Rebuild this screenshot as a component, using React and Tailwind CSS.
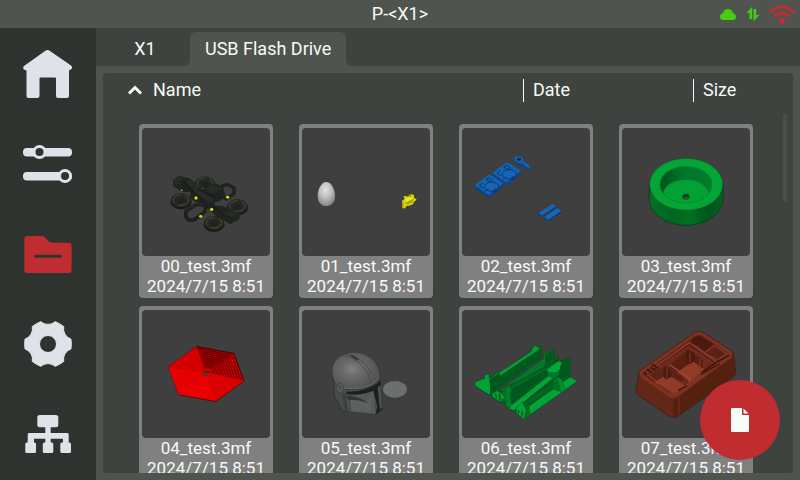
import React from "react";

const gearPath = (() => {
  const point = (deg) => {
    const a = (deg * Math.PI) / 180;
    return `${(25 + 23.5 * Math.cos(a)).toFixed(2)} ${(25 + 23.5 * Math.sin(a)).toFixed(2)}`;
  };
  let d = `M${point(-12)}`;
  for (let k = 0; k < 6; k += 1) {
    d += `A34 34 0 0 1 ${point(k * 60 + 12)}A11 11 0 0 0 ${point(k * 60 + 48)}`;
  }
  return `${d}ZM33.5 25A8.5 8.5 0 1 0 16.5 25A8.5 8.5 0 1 0 33.5 25Z`;
})();

function HomeIcon() {
  return (
    <path d="M22 3Q24.500 1 27 3L48 17.500Q49.800 19.200 48.500 21L46 22.500V48q0 2-2 2H35q-2 0-2-2V30.500Q33 29.500 32 29.500H17.500Q16.500 29.500 16.500 30.500V48q0 2-2 2H5.500q-2 0-2-2V22.500L.8 21.500Q-.5 19.500 1 18Z" />
  );
}

function SlidersIcon() {
  return (
    <>
      <rect x="0" y="9" width="49" height="8.500" rx="4" />
      <rect x="0" y="33" width="49" height="8.500" rx="4" />
      <circle cx="16.500" cy="13" r="5.500" className="fill-[#2e332f] stroke-[#dfe2e8] stroke-[3]" />
      <circle cx="42" cy="37" r="5.500" className="fill-[#2e332f] stroke-[#dfe2e8] stroke-[3]" />
    </>
  );
}

function FolderIcon() {
  return (
    <>
      <path d="M1.300 10Q1.300 7 4.300 7H18.500Q20.500 7 22 8.500L26 12.500Q27.500 13.700 29.500 13.700H45.500Q48.600 13.700 48.600 16.700V41Q48.600 44 45.600 44H4.300Q1.300 44 1.300 41Z" />
      <rect x="11" y="25.800" width="28" height="3" rx="1.500" className="fill-[#2e332f]" />
    </>
  );
}

function GearIcon() {
  return <path fillRule="evenodd" d={gearPath} className="stroke-[#dfe2e8] stroke-[1]" strokeLinejoin="round" />;
}

function NetworkIcon() {
  return (
    <>
      <rect x="14.300" y="5" width="21" height="12.300" rx="2.500" />
      <path d="M22.300 16H27.700V23H44.500Q45.700 23 45.700 24.500V33H40V28.800H27.700V33H22.300V28.800H11V33H4.700V24.500Q4.700 23 6 23H22.300Z" />
      <rect x="2.300" y="32.500" width="10.700" height="10.500" rx="1.500" />
      <rect x="19.800" y="32.500" width="10.500" height="10.500" rx="1.500" />
      <rect x="37.300" y="32.500" width="10.700" height="10.500" rx="1.500" />
    </>
  );
}

const NAV = [
  { label: "Home", Icon: HomeIcon },
  { label: "Controls", Icon: SlidersIcon },
  { label: "Files", Icon: FolderIcon, active: true },
  { label: "Settings", Icon: GearIcon },
  { label: "Network", Icon: NetworkIcon },
];

function RobotModel() {
  const wheels = [
    [225, 207],
    [153, 257],
    [322, 275],
    [252, 325],
  ];
  return (
    <svg viewBox="36 39 384 384" className="size-full">
      <path d="M272 215L292 208L312 219V236L290 252L268 240" fill="none" stroke="#1f2320" strokeWidth="10" />
      {wheels.map(([x, y]) => (
        <g key={`${x}-${y}`}>
          <ellipse cx={x} cy={y + 3} rx="32" ry="23" fill="#191b19" />
          <ellipse cx={x} cy={y - 2} rx="30" ry="21" fill="#272b28" />
          <ellipse cx={x} cy={y - 2} rx="23" ry="16" fill="#242825" stroke="#74740f" strokeWidth="1.500" strokeDasharray="40 12" />
          <path d={`M${x - 12} ${y}q12-12 24-2q-3 12-16 12z`} fill="#1e211f" />
        </g>
      ))}
      <path d="M129 194L147 182L163 187L178 190L197 205L194 216L213 229L240 207L264 208L281 222L286 240L270 258L252 262L256 272L276 272L300 284L330 293L328 313L300 328L281 316L262 306L246 292L232 278L216 268L194 259L179 247L181 232L156 230L130 214Z" fill="#1f2320" />
      <path d="M129 194L147 182L163 187L147 200L154 207L137 212ZM226 222L244 208L277 219L262 230L246 238ZM282 293L304 287L327 295L307 307Z" fill="#282c29" />
      <path d="M163 199L181 193L196 207L216 243L205 242L177 211ZM206 225L232 238L253 254L241 264L207 240Z" fill="#272b28" />
      <path d="M180 222L218 254M215 228L254 247M248 274L280 300M163 199L179 222" stroke="#151816" strokeWidth="3" />
      <path d="M168 289L199 268L220 269L228 276L224 291L193 314L177 316L168 306Z" fill="none" stroke="#1d201e" strokeWidth="11" />
      <path d="M169 286L199 265L219 267" fill="none" stroke="#2b2f2c" strokeWidth="3" />
      <g fill="#d8d80a">
        <ellipse cx="198" cy="249" rx="5" ry="5" />
        <ellipse cx="245" cy="283" rx="5" ry="5" />
        <ellipse cx="293" cy="247" rx="5" ry="4" />
        <ellipse cx="212" cy="304" rx="5" ry="4" />
        <circle cx="155" cy="226" r="2.500" />
      </g>
    </svg>
  );
}

function EggModel() {
  return (
    <svg viewBox="36 39 384 384" className="size-full">
      <defs>
        <radialGradient id="egg" cx="0.45" cy="0.32" r="0.7">
          <stop offset="0" stopColor="#e2e2e2" />
          <stop offset="0.5" stopColor="#bcbcbc" />
          <stop offset="1" stopColor="#828282" />
        </radialGradient>
      </defs>
      <path d="M109 201C124 201 135 224 135 242C135 262 124 273 109 273C94 273 83 262 83 242C83 224 94 201 109 201Z" fill="url(#egg)" />
      <path d="M336 257L344 252L340 244L349 243L356 247L364 244L360 237L371 239L373 248L380 254L372 260L369 268L357 272L348 274L346 280L337 280Z" fill="#d6d600" />
      <path d="M344 257L356 252L362 257L371 251L368 262L357 267L350 269ZM336 257L341 263L340 280H336ZM360 238L364 244L357 249L350 246Z" fill="#a3a300" />
      <path d="M346 251L358 246L368 245L362 253L353 260L346 261Z" fill="#ecec1c" />
    </svg>
  );
}

function BluePlate({ transform }) {
  return (
    <g transform={transform}>
      <path d="M74 212L114 180Q118 177 122 180L160 204V213L122 246Q118 250 114 247L76 222Z" fill="#0c4485" />
      <path d="M74 211L114 180Q118 177 122 180L160 204L121 237Q117 241 113 238Z" fill="#1762ae" />
      <ellipse cx="125" cy="215" rx="21" ry="14" fill="#1865b3" stroke="#0a3a70" strokeWidth="3" />
      <path d="M100 220L88 211L99 203M108 193L116 188L128 195L121 201ZM104 230L116 222" fill="none" stroke="#0a3a70" strokeWidth="3" />
      <path d="M126 229L137 220L143 227L134 233Z" fill="#0a3a70" />
    </g>
  );
}

function BluePartsModel() {
  return (
    <svg viewBox="36 39 384 384" className="size-full">
      <BluePlate transform="translate(53 -37)" />
      <BluePlate />
      <path d="M192 128L201 123L215 125L222 138L241 153L242 166L234 166L214 152L199 147L193 139Z" fill="#0c4485" />
      <path d="M193 127L202 123L216 127L221 138L242 155L235 160L216 145L202 143L194 136Z" fill="#1762ae" />
      <ellipse cx="207" cy="133" rx="7" ry="4" fill="#0a2d55" />
      <path d="M265 295L307 268L318 275V279L276 305L265 300ZM283 308L322 280L335 287V292L296 318L283 312Z" fill="#0a3a70" />
      <path d="M265 294L307 267L318 274L276 302ZM283 306L322 279L335 287L295 315Z" fill="#1865b3" />
    </svg>
  );
}

function RingModel() {
  return (
    <svg viewBox="36 69 384 384" className="size-full">
      <defs>
        <linearGradient id="ring-side">
          <stop offset="0" stopColor="#007326" />
          <stop offset="0.3" stopColor="#006420" />
          <stop offset="0.55" stopColor="#00701f" />
          <stop offset="0.8" stopColor="#00561b" />
          <stop offset="1" stopColor="#00611e" />
        </linearGradient>
        <linearGradient id="ring-inner">
          <stop offset="0" stopColor="#00501a" />
          <stop offset="0.45" stopColor="#00752a" />
          <stop offset="1" stopColor="#007d2b" />
        </linearGradient>
        <clipPath id="ring-hole">
          <ellipse cx="228" cy="239" rx="79" ry="56" />
        </clipPath>
      </defs>
      <path d="M118 237V287C122 330 171 361 228 361C285 361 336 328 339 285V237Z" fill="url(#ring-side)" stroke="#0e3118" strokeWidth="2" />
      <ellipse cx="228.500" cy="238" rx="110" ry="78" fill="#02a536" stroke="#174423" strokeWidth="1.500" />
      <ellipse cx="228" cy="239" rx="79" ry="56" fill="url(#ring-inner)" />
      <g clipPath="url(#ring-hole)">
        <ellipse cx="228" cy="272" rx="70" ry="49" fill="#02a134" stroke="#007d2a" strokeWidth="3" />
        <ellipse cx="228" cy="239" rx="78" ry="55" fill="none" stroke="#008b2d" strokeWidth="3" />
      </g>
      <ellipse cx="228" cy="275" rx="11" ry="9" fill="#004b19" />
      <ellipse cx="229" cy="280" rx="8" ry="4" fill="#494949" />
    </svg>
  );
}

function HexModel() {
  const rows = Array.from({ length: 13 }, (_, i) => i / 13);
  const rim = [
    [200, 140],
    [311, 161],
    [341, 242],
    [257, 302],
    [146, 282],
    [115, 200],
  ];
  const towards = ([x, y], t) => [x + (228 - x) * t, y + (217 - y) * t];
  const fills = ["#b00000", "#c00000", "#e00000", "#ee0000", "#e80000", "#d80000"];
  const lines = ["#300000", "#400000", "#cc0000", "#e40000", "#dc0000", "#c60000"];
  return (
    <svg viewBox="36 30 384 384" className="size-full">
      <path d="M115 200L200 139L312 160L342 243L257 305L146 284Z" fill="#7c0000" stroke="#351010" strokeWidth="2" />
      {rim.map((p, i) => {
        const q = rim[(i + 1) % 6];
        return (
          <g key={p.join("-")}>
            <path d={`M${p.join(" ")}L${q.join(" ")}L228 217Z`} fill={fills[i]} />
            {rows.map((t) => (
              <path
                key={t}
                d={`M${towards(p, t).join(" ")}L${towards(q, t).join(" ")}`}
                stroke={lines[i]}
                strokeWidth="2"
              />
            ))}
          </g>
        );
      })}
      <path d="M217 210L232 203L246 209L243 222L226 229L214 222Z" fill="#c40000" />
      <path d="M216 219L225 216L242 219L234 226L221 225Z" fill="#3f3f3f" />
      <path d="M222 217L240 216" stroke="#4a0000" strokeWidth="2" />
    </svg>
  );
}

function HelmetModel() {
  return (
    <svg viewBox="36 30 384 384" className="size-full">
      <defs>
        <radialGradient id="dome" cx="0.42" cy="0.45" r="0.62">
          <stop offset="0" stopColor="#808180" />
          <stop offset="0.35" stopColor="#686968" />
          <stop offset="1" stopColor="#4e504f" />
        </radialGradient>
      </defs>
      <path d="M127 215L134 290L157 332L256 344L277 328L269 230Z" fill="#484c4a" stroke="#252725" strokeWidth="1.500" />
      <path d="M166 275L252 262L256 343L182 335L167 326Z" fill="#545a57" />
      <path d="M170 274Q218 278 262 250L270 240L272 258L254 270Q218 289 168 282Z" fill="#1c1f1d" />
      <path d="M249 268L268 255L277 327L257 343L262 320Z" fill="#1b1e1c" />
      <path d="M263 262L272 256L276 324L269 328Z" fill="#4b504d" />
      <path d="M168 286Q214 290 231 309Q203 298 174 301Z" fill="#323634" />
      <path d="M174 301Q203 298 231 309L244 286L246 335L182 333Z" fill="#5c625f" />
      <path d="M156 280L167 279L176 331L165 332Z" fill="#3c403e" />
      <path d="M175 283L182 333" stroke="#3a3e3c" strokeWidth="3" />
      <path d="M126 213C127 175 158 157 195 157C239 158 270 190 270 234C251 266 205 275 151 266C137 256 127 239 126 213Z" fill="url(#dome)" stroke="#292b29" strokeWidth="1.500" />
      <path d="M154 166Q213 175 235 225Q241 241 240 259M161 162Q223 169 245 225" fill="none" stroke="#434544" strokeWidth="2" />
      <path d="M178 166L186 164L206 177L202 182Z" fill="#303331" />
      <path d="M151 262Q200 272 245 254L269 233" fill="none" stroke="#717472" strokeWidth="2" />
      <ellipse cx="150" cy="264" rx="10" ry="13" fill="#5c605e" stroke="#3a3d3b" strokeWidth="2" />
      <path d="M144 257L153 261L149 271" fill="none" stroke="#333634" strokeWidth="3" />
      <ellipse cx="315" cy="271" rx="37" ry="28" fill="#404542" stroke="#2c302e" strokeWidth="1" />
      <ellipse cx="315" cy="268" rx="36" ry="25" fill="#6a706c" />
    </svg>
  );
}

function RailsModel() {
  return (
    <svg viewBox="36 30 384 384" className="size-full" strokeLinejoin="round">
      <path d="M76 246L103 234V225L119 222V234L149 211V221L245 153V144L256 136L265 141L275 139V174L118 286L76 259Z" fill="#007d28" stroke="#0a4119" strokeWidth="2" />
      <path d="M118 240L149 218L275 144V172L119 283Z" fill="#00581d" />
      <path d="M76 247L101 237L121 256L119 284L76 257ZM104 226L116 222L119 254L105 248ZM243 156L254 137L265 142L263 151L150 227L149 218Z" fill="#02a136" />
      <path d="M134 251L265 165" stroke="#008c2d" strokeWidth="3" strokeDasharray="3 18" />
      <path d="M126 280L141 270L155 277L282 177V163L313 145V184L325 169V194L180 303L149 307L127 293Z" fill="#007427" stroke="#0a4119" strokeWidth="2" />
      <path d="M157 267L282 176L281 162L312 147V177L164 285Z" fill="#007a28" />
      <path d="M284 164L312 147V177L286 195ZM180 264L324 173V183L184 282Z" fill="#00591d" />
      <path d="M126 281L142 273L164 290L149 304L128 290Z" fill="#029d34" />
      <path d="M136 280L140 293M148 282L150 300" stroke="#00531b" strokeWidth="4" />
      <path d="M166 263L177 258L324 181L328 185L360 172V236L381 244L222 357L198 340L188 332L166 319Z" fill="#006a23" stroke="#0a4119" strokeWidth="2" />
      <path d="M181 270L294 207L327 184L358 174V232L240 316L184 320Z" fill="#00581d" />
      <path d="M183 317L296 228L310 234L203 320L190 331L178 326ZM222 356L381 244L361 232L239 318L221 348Z" fill="#02a337" />
      <path d="M166 264L176 258L181 266L182 325L167 317Z" fill="#007d29" />
      <path d="M292 208L326 184L335 187L328 211L317 218L293 215Z" fill="#03aa39" />
      <path d="M293 215L318 218L328 211V224L310 236L294 228Z" fill="#00782a" />
      <path d="M309 244L323 231L336 241L347 266L333 276L309 269Z" fill="#008d2e" />
      <path d="M309 244L323 231L333 276L309 268Z" fill="#007024" />
      <path d="M198 323L217 305L237 310L241 340L221 357L199 339Z" fill="#006b23" />
      <path d="M200 326L215 307L228 329L222 356L200 340Z" fill="#02a136" />
      <path d="M205 330L206 339M216 334V347" stroke="#00531b" strokeWidth="4" />
      <path d="M221 309L310 249V262L239 312Z" fill="#006722" />
    </svg>
  );
}

function TrayModel() {
  return (
    <svg viewBox="36 30 384 384" className="size-full" strokeLinejoin="round">
      <path d="M87 215L253 98Q267 89 280 98L365 153Q371 157 372 166L377 216Q376 227 366 233L208 346Q192 358 176 348L86 286Q78 281 79 272Z" fill="#632717" stroke="#321a13" strokeWidth="2" />
      <path d="M190 294L370 171L377 218Q376 227 366 233L208 346Q198 354 190 352Z" fill="#54200f" />
      <path d="M87 214L253 98Q267 89 280 98L365 153Q373 160 366 170L205 289Q190 299 176 290L92 231Q82 223 87 214Z" fill="#7e3220" stroke="#471c10" strokeWidth="2" />
      <path d="M97 218L254 106Q267 98 278 106L357 158Q363 163 357 168L201 280Q190 288 179 281L100 228Q94 223 97 218Z" fill="#672616" stroke="#873826" strokeWidth="2" />
      <path d="M244 119L266 106L310 133L281 157L244 136Z" fill="#4b190f" />
      <path d="M244 131L266 139L289 160L320 138L358 163L320 194L244 151Z" fill="#702b1b" />
      <path d="M283 159L315 137L350 162L322 179Z" fill="#5b2114" stroke="#8f3e2b" strokeWidth="3" />
      <path d="M108 220L238 128L325 190L190 281Z" fill="#562013" stroke="#8a3a28" strokeWidth="4" />
      <path d="M118 220L236 140L311 190L194 272Z" fill="#6b2919" stroke="#7c3222" strokeWidth="3" />
      <path d="M178 194L235 151L279 180V205L235 237L181 203Z" fill="#571f12" />
      <path d="M202 217L248 184L286 210L239 245Z" fill="#913c29" />
      <path d="M121 226L167 197L225 235L192 264Z" fill="#5d2216" />
      <path d="M133 247L172 222L229 259L194 280Z" fill="#903b28" />
      <path d="M179 194L239 236V246" fill="none" stroke="#9b4733" strokeWidth="4" />
      <path d="M162 199L181 207L185 230L168 239L160 230ZM228 151L253 158V184L239 193L230 184Z" fill="#4c190f" />
      <path d="M171 205V235M240 158V188M270 176V206M282 184V207" stroke="#7d3020" strokeWidth="4" />
      <path d="M275 216L322 185L358 166M205 271L231 257M272 223L330 191" fill="none" stroke="#40140b" strokeWidth="4" />
      <path d="M101 216L111 223M111 208L126 217M122 202L137 211M126 193L145 205" stroke="#32120b" strokeWidth="4" />
      <path d="M93 231L177 291Q190 299 204 289L366 170" fill="none" stroke="#883a28" strokeWidth="2" />
      <path d="M207 293V344" stroke="#77301f" strokeWidth="3" />
    </svg>
  );
}

const FILES = [
  { name: "00_test.3mf", Model: RobotModel },
  { name: "01_test.3mf", Model: EggModel },
  { name: "02_test.3mf", Model: BluePartsModel },
  { name: "03_test.3mf", Model: RingModel },
  { name: "04_test.3mf", Model: HexModel },
  { name: "05_test.3mf", Model: HelmetModel },
  { name: "06_test.3mf", Model: RailsModel },
  { name: "07_test.3mf", Model: TrayModel },
];

function FileCard({ name, Model }) {
  return (
    <button type="button" className="flex h-[174px] flex-col items-center rounded bg-[#808080] px-[3px] pt-1 text-[17px]">
      <span className="block size-32 overflow-hidden rounded bg-[#3f3f3f]">
        <Model />
      </span>
      <span className="whitespace-nowrap leading-5">{name}</span>
      <span className="whitespace-nowrap leading-[21px]">2024/7/15 8:51</span>
    </button>
  );
}

function StatusIcons() {
  return (
    <div className="flex items-center justify-end gap-2 pr-1">
      <svg viewBox="0 0 18 14" className="mr-px h-3.5 w-[18px] fill-[#49cc10]" role="img" aria-label="Cloud connected">
        <path d="M4.500 13Q1 13 1 9.800Q1 7 4 6.200Q5 2 9 2Q13 2 14 6.200Q17 7 17 9.800Q17 13 13.500 13Z" />
      </svg>
      <svg viewBox="0 0 14 16" className="h-4 w-3.5 fill-[#49cc10]" role="img" aria-label="Transfer">
        <path d="M.5 7L6.200 .8V13H3.500V7Z" />
        <path d="M7.500 15.200V3H10.200V9H13.500Z" />
      </svg>
      <svg viewBox="0 0 28 22" className="h-[22px] w-7" role="img" aria-label="No Wi-Fi">
        <path d="M2.500 8.500Q14 -1 25.500 8.500M7 13Q14 7 21 13" fill="none" stroke="#c02c30" strokeWidth="3" strokeLinecap="round" />
        <circle cx="14" cy="18" r="3" fill="#c02c30" />
      </svg>
    </div>
  );
}

export default function App() {
  return (
    <div className="flex h-screen flex-col bg-[#4f544f] font-[Roboto,'Liberation_Sans',sans-serif] text-lg text-[#f7fbf7]">
      <header className="grid h-7 shrink-0 grid-cols-[1fr_auto_1fr] items-center">
        <span />
        <h1>P-&lt;X1&gt;</h1>
        <StatusIcons />
      </header>

      <div className="flex min-h-0 flex-1">
        <nav className="flex w-24 shrink-0 flex-col bg-[#2e332f]">
          {NAV.map(({ label, Icon, active }) => (
            <button key={label} type="button" aria-label={label} className="flex flex-1 items-center justify-center">
              <svg viewBox="0 0 50 50" className={active ? "size-[50px] fill-[#c02c30]" : "size-[50px] fill-[#dfe2e8]"}>
                <Icon />
              </svg>
            </button>
          ))}
        </nav>

        <main className="flex min-w-0 flex-1 flex-col">
          <div role="tablist" className="flex h-[38px] shrink-0">
            <button type="button" role="tab" aria-selected="false" className="w-[94px] rounded-br-md bg-[#3f433f] pl-1 pt-1">
              X1
            </button>
            <div className="flex bg-[#3f433f] pt-1">
              <button type="button" role="tab" aria-selected="true" className="rounded-t-md bg-[#4f544f] px-[15px]">
                USB Flash Drive
              </button>
            </div>
            <div className="flex-1 rounded-bl-md bg-[#3f433f]" />
          </div>

          <section className="relative m-[7px] flex min-h-0 flex-1 flex-col overflow-hidden rounded bg-[#3f433f]">
            <div className="flex h-[34px] shrink-0 items-center">
              <button type="button" className="flex flex-1 items-center gap-2.5 pl-6">
                <svg viewBox="0 0 16 12" className="h-3 w-4 fill-none stroke-[#f7fbf7] stroke-[3]">
                  <path d="M2 9.500L8 3.500L14 9.500" />
                </svg>
                Name
              </button>
              <button type="button" className="h-[23px] w-[170px] border-l border-[#f7fbf7] pl-[9px] text-left leading-[22px]">
                Date
              </button>
              <button type="button" className="h-[23px] w-[100px] border-l border-[#f7fbf7] pl-[9px] text-left leading-[22px]">
                Size
              </button>
            </div>
            <div className="min-h-0 flex-1 overflow-y-auto pl-9 pt-[17px] [scrollbar-width:none]">
              <div className="grid grid-cols-[repeat(auto-fill,134px)] gap-x-[26px] gap-y-2">
                {FILES.map((file) => (
                  <FileCard key={file.name} {...file} />
                ))}
              </div>
            </div>
            <div className="absolute right-1.5 top-[41px] h-[88px] w-1 rounded-full bg-[#4a4e4a]" />
          </section>
        </main>
      </div>

      <button
        type="button"
        aria-label="Files"
        className="fixed bottom-5 right-5 flex size-20 items-center justify-center rounded-full bg-[#c02c30]"
      >
        <svg viewBox="0 0 18 24" className="h-6 w-[18px] fill-[#f7fbf7]">
          <path d="M1 0H11V7H18V23Q18 24 17 24H1Q0 24 0 23V1Q0 0 1 0Z" />
          <path d="M12.500 .5L17.500 5.500H12.500Z" />
        </svg>
      </button>
    </div>
  );
}
